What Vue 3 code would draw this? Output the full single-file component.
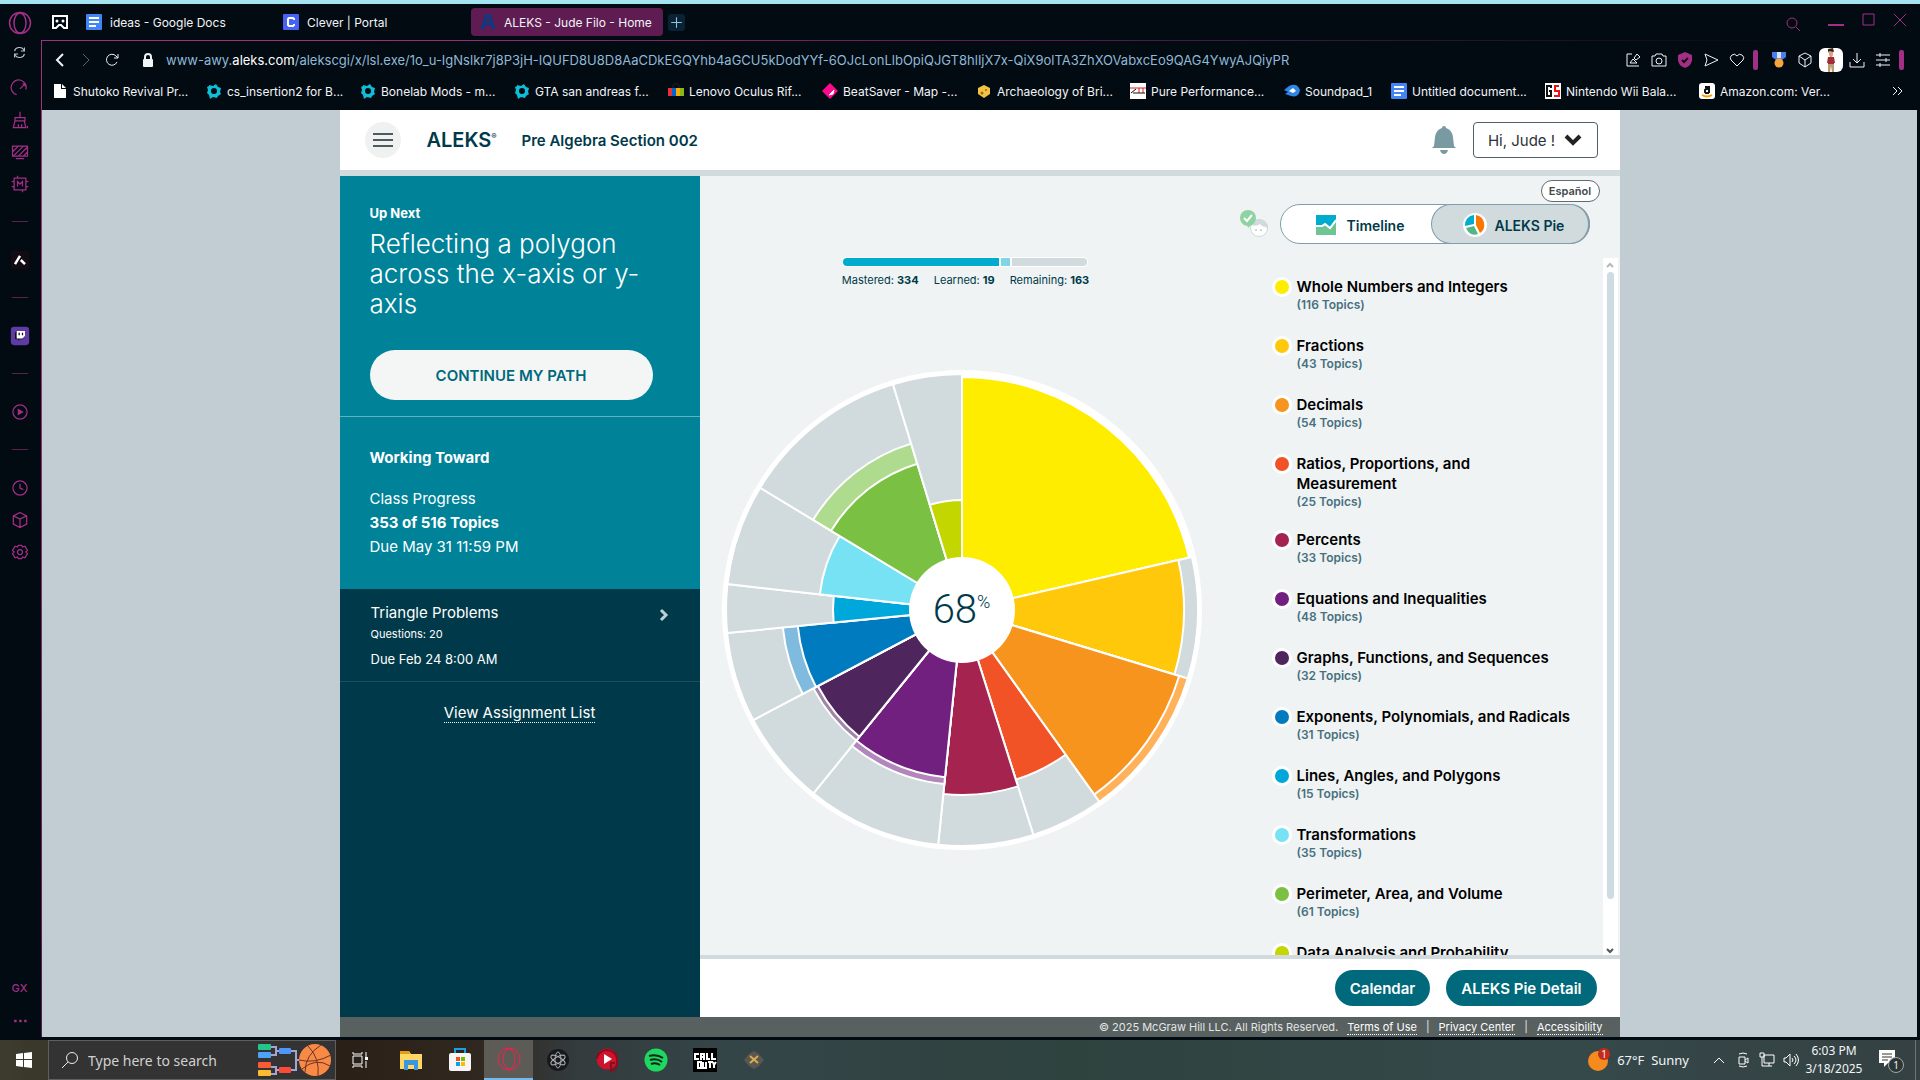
<script setup>
const bookmarks = [
  { icon: 'file', label: 'Shutoko Revival Pr...' },
  { icon: 'gear', label: 'cs_insertion2 for B...' },
  { icon: 'gear', label: 'Bonelab Mods - m...' },
  { icon: 'gear', label: 'GTA san andreas f...' },
  { icon: 'bag', label: 'Lenovo Oculus Rif...' },
  { icon: 'saber', label: 'BeatSaver - Map -...' },
  { icon: 'cheese', label: 'Archaeology of Bri...' },
  { icon: 'pure', label: 'Pure Performance...' },
  { icon: 'comet', label: 'Soundpad_1', short: true },
  { icon: 'docs', label: 'Untitled document...' },
  { icon: 'gs', label: 'Nintendo Wii Bala...' },
  { icon: 'amazon', label: 'Amazon.com: Ver...' },
]

// start/end are degrees clockwise from the top; mastered and learned are radii
const topics = [
  { name: 'Whole Numbers and Integers', count: 116, color: '#ffed00', soft: '#fff799', start: 0, end: 77, mastered: 233, learned: 0 },
  { name: 'Fractions', count: 43, color: '#ffc80a', soft: '#ffe07a', start: 77, end: 106.9, mastered: 222, learned: 0 },
  { name: 'Decimals', count: 54, color: '#f7941d', soft: '#ffb259', start: 106.9, end: 144.4, mastered: 227, learned: 236 },
  { name: 'Ratios, Proportions, and Measurement', count: 25, color: '#f15327', soft: '#f8a48c', start: 144.4, end: 162.4, mastered: 178, learned: 0 },
  { name: 'Percents', count: 33, color: '#a5234f', soft: '#d08aa2', start: 162.4, end: 185.8, mastered: 185, learned: 0 },
  { name: 'Equations and Inequalities', count: 48, color: '#722080', soft: '#b285bb', start: 185.8, end: 219, mastered: 168, learned: 175 },
  { name: 'Graphs, Functions, and Sequences', count: 32, color: '#4f255d', soft: '#a084a8', start: 219, end: 242.2, mastered: 163, learned: 168 },
  { name: 'Exponents, Polynomials, and Radicals', count: 31, color: '#007bc0', soft: '#7fbbde', start: 242.2, end: 264.4, mastered: 165, learned: 180 },
  { name: 'Lines, Angles, and Polygons', count: 15, color: '#00a7da', soft: '#80d3ed', start: 264.4, end: 276.3, mastered: 129, learned: 0 },
  { name: 'Transformations', count: 35, color: '#76e2f4', soft: '#bbf1fa', start: 276.3, end: 301.2, mastered: 143, learned: 0 },
  { name: 'Perimeter, Area, and Volume', count: 61, color: '#7ac143', soft: '#aedb8e', start: 301.2, end: 343, mastered: 153, learned: 174 },
  { name: 'Data Analysis and Probability', count: 23, color: '#c3d600', soft: '#e1eb80', start: 343, end: 360, mastered: 110, learned: 0 },
]

function wedge(radius, start, end) {
  const point = (deg) => {
    const a = (deg * Math.PI) / 180
    return `${(240 + radius * Math.sin(a)).toFixed(2)} ${(240 - radius * Math.cos(a)).toFixed(2)}`
  }
  return `M240 240L${point(start)}A${radius} ${radius} 0 0 1 ${point(end)}Z`
}
</script>

<template>
  <div class="desktop">
    <div class="browser">
      <nav class="rail" aria-label="Browser sidebar">
        <svg class="ri opera" viewBox="0 0 24 24"><circle cx="12" cy="12" r="10.5" /><ellipse cx="12" cy="12" rx="6" ry="10" /></svg>
        <svg class="ri pale" viewBox="0 0 24 24"><path d="M5 10a7 6 0 0 1 13-2l1 2M19 5v5h-5M19 14a7 6 0 0 1-13 2l-1-2M5 19v-5h5" /></svg>
        <svg class="ri" viewBox="0 0 24 24"><path d="M8 20a9 9 0 1 1 11-6M12 13l6-6M15 7h3v3" /></svg>
        <svg class="ri" viewBox="0 0 24 24"><path d="M12 2v7M6 9h12v4H6zM6 13l-2 8h15l-2-8M10 17v4M14 17v4M21 19v3" /></svg>
        <svg class="ri" viewBox="0 0 24 24"><path d="M3 5h18v12H3zM3 12l7-7M4 17L16 5M10 17L21 6M16 17l5-5M7 20h10" /></svg>
        <svg class="ri" viewBox="0 0 24 24"><path d="M5 5h14v14H5zM9 2v3M15 19v3M2 9h3M19 9h3M2 15h3M19 15h3M9 15V9l3 3 3-3v6" /></svg>
        <i class="dash"></i>
        <svg class="ri tile" viewBox="0 0 24 24"><rect x="1" y="1" width="22" height="22" rx="3" fill="#120b14" stroke="none" /><path d="M6 17l6-10M13 12l5 5" stroke="#fff" stroke-width="3" /></svg>
        <i class="dash"></i>
        <svg class="ri tile" viewBox="0 0 24 24"><rect x="1" y="1" width="22" height="22" rx="4" fill="#5f3ca5" stroke="none" /><path d="M6 8l2-2h10v7l-3 3h-3l-2 2v-2H6z" fill="#111" stroke="none" /><path d="M8 6h10v6l-3 3H8z" fill="#fff" stroke="none" /><path d="M11 8v3M15 8v3" stroke="#111" /></svg>
        <i class="dash"></i>
        <svg class="ri" viewBox="0 0 24 24"><circle cx="12" cy="12" r="8.5" /><path d="M10 9l5 3-5 3z" fill="#a22f86" /></svg>
        <i class="dash"></i>
        <svg class="ri" viewBox="0 0 24 24"><circle cx="12" cy="12" r="8.5" /><path d="M12 7v5l4 2" /></svg>
        <svg class="ri" viewBox="0 0 24 24"><path d="M12 3l8 4v10l-8 4-8-4V7zM4 7l8 4 8-4M12 11v10" /></svg>
        <svg class="ri" viewBox="0 0 24 24"><path d="M10 4h4l1 2 3-1 3 5-2 2 2 2-3 5-3-1-1 2h-4l-1-2-3 1-3-5 2-2-2-2 3-5 3 1z" /><circle cx="12" cy="12" r="3" /></svg>
        <span class="grow"></span>
        <b class="gx">GX</b>
        <svg class="ri" viewBox="0 0 24 24"><path d="M5 12h3M11 12h3M17 12h3" stroke-width="3" /></svg>
      </nav>

      <div class="frame">
        <div class="tabs">
          <svg class="vr" viewBox="0 0 18 18"><path d="M2 3h14v12h-3l-3-3H8l-3 3H2z" fill="none" stroke="#fff" stroke-width="2" /><circle cx="6" cy="8" r="1.5" fill="#fff" /><circle cx="12" cy="8" r="1.5" fill="#fff" /></svg>
          <button class="tab">
            <svg viewBox="0 0 16 16"><rect width="16" height="16" rx="1" fill="#4285f4" /><path d="M3 4h10M3 8h10M3 12h7" stroke="#fff" stroke-width="2" /></svg>
            ideas - Google Docs
          </button>
          <button class="tab">
            <svg viewBox="0 0 16 16"><rect width="16" height="16" rx="1" fill="#4763f5" /><path d="M11 6V5L10 4H6L5 5v6l1 1h4l1-1v-1" fill="none" stroke="#fff" stroke-width="2" /></svg>
            Clever | Portal
          </button>
          <button class="tab active">
            <svg viewBox="0 0 16 16"><path d="M2 15L7 1h2l5 14M5 10h6" fill="none" stroke="#083b83" stroke-width="3" /></svg>
            ALEKS - Jude Filo - Home
          </button>
          <button class="plus" aria-label="New tab"><svg viewBox="0 0 16 16"><path d="M8 3v10M3 8h10" stroke="#8fc4e0" /></svg></button>
          <span class="grow"></span>
          <div class="winctl">
            <svg class="find" viewBox="0 0 16 16"><circle cx="7" cy="7" r="5" /><path d="M11 11l4 4" /></svg>
            <svg viewBox="0 0 16 16"><path d="M0 13h16" stroke-width="2" /></svg>
            <svg viewBox="0 0 16 16"><path d="M3 2h11v11H3z" /></svg>
            <svg viewBox="0 0 16 16"><path d="M2 2l12 12M14 2L2 14" /></svg>
          </div>
        </div>

        <div class="panel">
          <div class="address">
            <svg class="ic" viewBox="0 0 16 16"><path d="M11 2L5 8l6 6" stroke-width="2" /></svg>
            <svg class="ic dim" viewBox="0 0 16 16"><path d="M5 2l6 6-6 6" /></svg>
            <svg class="ic" viewBox="0 0 16 16"><path d="M13 10a5.500 5.500 0 1 1-1-6l2 2M14 2v4h-4" /></svg>
            <svg class="ic lock" viewBox="0 0 16 16"><rect x="3" y="7" width="10" height="8" rx="1" fill="#f2f5f7" stroke="none" /><path d="M5 8V5a3 3 0 0 1 6 0v3" stroke-width="2" /></svg>
            <div class="url">www-awy.<b>aleks.com</b>/alekscgi/x/lsl.exe/1o_u-IgNslkr7j8P3jH-IQUFD8U8D8AaCDkEGQYhb4aGCU5kDodYYf-6OJcLonLlbOpiQJGT8hlIjX7x-QiX9olTA3ZhXOVabxcEo9QAG4YwyAJQiyPR</div>
            <span class="grow"></span>
            <div class="tools">
              <svg class="ic" viewBox="0 0 16 16"><path d="M7 2H2v12h12M5 11l3-4 4 4zM9 6l3-4 3 3-4 3z" /></svg>
              <svg class="ic" viewBox="0 0 16 16"><path d="M1 4h3l1-2h6l1 2h3v10H1z" /><circle cx="8" cy="9" r="3" /></svg>
              <svg class="ic" viewBox="0 0 16 16"><path d="M8 0l7 3v5q0 5-7 8-7-3-7-8V3z" fill="#a22f86" stroke="none" /><path d="M5 8l2 2 4-4" stroke="#1a0716" stroke-width="2" /></svg>
              <svg class="ic" viewBox="0 0 16 16"><path d="M2 2l13 6-13 6 2-6z" /></svg>
              <svg class="ic" viewBox="0 0 16 16"><path d="M8 14L2 8a3.600 3.600 0 0 1 6-4 3.600 3.600 0 0 1 6 4z" /></svg>
              <i class="bar"></i>
              <svg class="ic" viewBox="0 0 16 16"><path d="M1 0h14v5l-4 3H5L1 5z" fill="#4c7df0" stroke="none" /><path d="M6 0h4v6H6z" fill="#d7e4ff" stroke="none" /><circle cx="8" cy="11" r="4.500" fill="#f6a63a" stroke="none" /></svg>
              <svg class="ic" viewBox="0 0 16 16"><path d="M8 1l6 3v7l-6 4-6-4V4zM2 4l6 4 6-4M8 8v7" /></svg>
              <svg class="avatar" viewBox="0 0 24 24"><rect width="24" height="24" rx="6" fill="#fff" /><path d="M10 2h4v5l-1 2h-2l-1-2z" fill="#dca27e" /><path d="M9 1l5-1 1 4-5-1-1 2z" fill="#382018" /><path d="M9 9h6l1 6h-1v1H9v-1H8z" fill="#a42b39" /><path d="M9 16h6v8h-2l-1-6-1 6H9z" fill="#b99c75" /></svg>
              <svg class="ic" viewBox="0 0 16 16"><path d="M8 1v10M4 7l4 4 4-4M1 10v5h14v-5" /></svg>
              <svg class="ic" viewBox="0 0 16 16"><path d="M1 3h14M1 8h14M1 13h14M5 1v4M11 6v4M5 11v4" /></svg>
              <i class="bar"></i>
            </div>
          </div>
          <div class="bookmarks">
            <a v-for="b in bookmarks" :key="b.label" href="#" class="bm" :class="{ short: b.short }">
              <svg v-if="b.icon === 'file'" viewBox="0 0 16 16"><path d="M2 1h7v5h5v9H2zM10 1l4 4h-4z" fill="#fff" /></svg>
              <svg v-else-if="b.icon === 'gear'" viewBox="0 0 16 16"><path d="M3 2l4 1 3-2 2 3 3 1-1 4 1 2-3 2-1 2-4-1-3 2-1-4-2-2 1-3-1-3 2-1z" fill="#10bdd6" /><circle cx="8" cy="8" r="3" fill="#020a12" /></svg>
              <svg v-else-if="b.icon === 'bag'" viewBox="0 0 16 16"><path d="M5 5V2q3-3 6 0v3" fill="none" stroke="#222" /><path d="M0 5h4v8H0z" fill="#e53238" /><path d="M4 5h4v8H4z" fill="#0064d2" /><path d="M8 5h4v8H8z" fill="#f5af02" /><path d="M12 5h4v8h-4z" fill="#86b817" /></svg>
              <svg v-else-if="b.icon === 'saber'" viewBox="0 0 16 16"><path d="M8 0l8 8-8 8-8-8z" fill="#ff0a8c" /><path d="M7 12l5-5-1 4z" stroke="#fff" fill="#fff" /></svg>
              <svg v-else-if="b.icon === 'cheese'" viewBox="0 0 16 16"><path d="M8 2l6 3v6l-6 4-6-4V5z" fill="#f5c243" /><circle cx="6" cy="10" r="1.500" fill="#9a6b15" /><circle cx="10" cy="7" r="1" fill="#9a6b15" /></svg>
              <svg v-else-if="b.icon === 'pure'" viewBox="0 0 16 16"><path d="M0 0h16v16H0z" fill="#fff" /><path d="M0 5h16M9 5v5M13 5v5" stroke="#d22" stroke-width="1" /><path d="M1 10l5-4M3 10h12" stroke="#111" stroke-width="1" /></svg>
              <svg v-else-if="b.icon === 'comet'" viewBox="0 0 16 16"><path d="M0 7l5-4q8-4 11 4-1 8-9 6l-6-2 3-2z" fill="#2f86e5" /><path d="M5 8l4-3 3 3-3 2z" fill="#fff" /></svg>
              <svg v-else-if="b.icon === 'docs'" viewBox="0 0 16 16"><rect width="16" height="16" rx="1" fill="#4285f4" /><path d="M3 4h10M3 8h10M3 12h7" stroke="#fff" stroke-width="2" /></svg>
              <svg v-else-if="b.icon === 'gs'" viewBox="0 0 16 16"><path d="M0 0h16v16H0z" fill="#fff" /><path d="M6 5V3H2v10h4V8H4" fill="none" stroke="#111" stroke-width="2" /><path d="M14 3h-4v5h4v5H9" fill="none" stroke="#e11" stroke-width="2" /></svg>
              <svg v-else viewBox="0 0 16 16"><rect width="16" height="16" rx="3" fill="#fff" /><path d="M6 4h4v6M10 6H7L6 7v2l1 1h3" fill="none" stroke="#111" stroke-width="2" /><path d="M3 12q5 3 10 0" fill="none" stroke="#f90" stroke-width="2" /></svg>
              <span>{{ b.label }}</span>
            </a>
            <span class="grow"></span>
            <svg class="more" viewBox="0 0 16 16"><path d="M3 4l4 4-4 4M8 4l4 4-4 4" /></svg>
          </div>

          <div class="viewport">
            <div class="app">
              <header class="top">
                <button class="burger" aria-label="Menu"><svg viewBox="0 0 36 36"><path d="M8 12h20M8 18h20M8 24h20" stroke="#4f5a5e" stroke-width="2" /></svg></button>
                <div class="logo">ALEKS<sup>®</sup></div>
                <h1>Pre Algebra Section 002</h1>
                <span class="grow"></span>
                <svg class="bell" viewBox="0 0 24 28"><path d="M12 0q2 0 2 2 6 2 7 9l1 9 2 2H0l2-2 1-9q1-7 7-9 0-2 2-2zM8 24h8q-1 4-4 4t-4-4z" fill="#7a9aa3" /></svg>
                <button class="user">Hi, Jude ! <svg viewBox="0 0 18 12"><path d="M2 2l7 7 7-7" /></svg></button>
              </header>

              <div class="columns">
                <aside class="side">
                  <section class="next">
                    <h3>Up Next</h3>
                    <h2>Reflecting a polygon across the x-axis or y-axis</h2>
                    <button>CONTINUE MY PATH</button>
                  </section>
                  <section class="toward">
                    <h3>Working Toward</h3>
                    <p>Class Progress</p>
                    <p><b>353 of 516 Topics</b></p>
                    <p>Due May 31 11:59 PM</p>
                  </section>
                  <section class="task">
                    <div>
                      <p>Triangle Problems</p>
                      <p class="small">Questions: 20</p>
                      <p class="due">Due Feb 24 8:00 AM</p>
                    </div>
                    <svg viewBox="0 0 10 14"><path d="M2 2l5 5-5 5" /></svg>
                  </section>
                  <p class="all"><a href="#">View Assignment List</a></p>
                </aside>

                <main class="main">
                  <div class="board">
                    <section class="chart">
                      <div class="summary">
                        <div class="progress"><i class="done"></i><i class="learned"></i><i class="rest"></i></div>
                        <div class="counts">
                          <span>Mastered: <b>334</b></span><span>Learned: <b>19</b></span><span>Remaining: <b>163</b></span>
                        </div>
                      </div>
                      <div class="pie">
                        <svg viewBox="0 0 480 480">
                          <circle cx="240" cy="240" r="240" fill="#fff" />
                          <g stroke="#fff" stroke-width="2">
                            <template v-for="t in topics" :key="t.name">
                              <path :d="wedge(236, t.start, t.end)" :fill="t.mastered > 230 ? '#fff' : '#d1dadd'" />
                              <path v-if="t.learned" :d="wedge(t.learned, t.start, t.end)" :fill="t.soft" />
                              <path :d="wedge(t.mastered, t.start, t.end)" :fill="t.color" />
                            </template>
                          </g>
                          <circle cx="240" cy="240" r="53" fill="#fff" />
                        </svg>
                        <div class="percent">68<sup>%</sup></div>
                      </div>
                    </section>

                    <section class="legend">
                      <div class="lang"><button>Español</button></div>
                      <div class="switch">
                        <svg class="status" viewBox="0 0 30 30"><circle cx="19" cy="19" r="8.500" fill="#fff" stroke="#d1dadd" /><path d="M11 16q3-6 9-6 7 1 8 8v3l-2-3q-4 0-6-3-4 3-9 1z" fill="#d1dadd" /><path d="M16 20v2M21 20v2" stroke="#cbd6da" stroke-width="2" /><circle cx="8" cy="9" r="8" fill="#8fd3a0" /><path d="M7 15l1 4 4-4z" fill="#8fd3a0" /><path d="M4 9l3 3 5-6" fill="none" stroke="#fff" stroke-width="2" /></svg>
                        <div class="toggle">
                          <button class="time">
                            <svg viewBox="0 0 20 20"><path d="M0 0h20v6l-6 7-5-4-4 3H0z" fill="#00accd" /><path d="M0 12h6l3-2 5 4 6-7v13H0z" fill="#6fc493" /><path d="M0 11h6l3-2 5 4 6-8" fill="none" stroke="#fff" stroke-width="2" /></svg>
                            Timeline
                          </button>
                          <button class="sel">
                            <svg viewBox="0 0 24 24"><circle cx="12" cy="12" r="12" fill="#fff" /><path d="M13 2a10 10 0 0 1 4 18l-4-8z" fill="#f97600" /><path d="M11 2v9l-9 2A10 10 0 0 1 11 2z" fill="#00accd" /><path d="M3 15l8-2 4 8Q7 24 3 15z" fill="#52b689" /></svg>
                            ALEKS Pie
                          </button>
                        </div>
                      </div>
                      <div class="scroller">
                        <ul>
                          <li v-for="t in topics" :key="t.name">
                            <i :style="{ background: t.color }"></i>
                            <div><strong>{{ t.name }}</strong><span>({{ t.count }} Topics)</span></div>
                          </li>
                        </ul>
                        <div class="track">
                          <svg viewBox="0 0 14 14"><path d="M4 9l3-3 3 3" stroke="#b8b8b8" /></svg>
                          <i></i>
                          <svg viewBox="0 0 14 14"><path d="M4 8l3 3 3-3" stroke="#555" /></svg>
                        </div>
                      </div>
                    </section>
                  </div>
                  <div class="actions"><button>Calendar</button><button>ALEKS Pie Detail</button></div>
                </main>
              </div>

              <footer class="foot">
                <span class="copy">© 2025 McGraw Hill LLC. All Rights Reserved.</span>
                <a href="#">Terms of Use</a><i>|</i><a href="#">Privacy Center</a><i>|</i><a href="#">Accessibility</a>
              </footer>
            </div>
          </div>
        </div>
      </div>
    </div>

    <div class="taskbar">
      <button class="cell" aria-label="Start"><svg viewBox="0 0 16 16"><path d="M0 2l7-1v6H0zM8 1l8-1v7H8zM0 8h7v7l-7-1zM8 8h8v8l-8-1z" fill="#fff" /></svg></button>
      <label class="search">
        <svg viewBox="0 0 18 18"><circle cx="11" cy="7" r="5.500" fill="none" stroke="#eee" /><path d="M7 11l-6 6" stroke="#eee" /></svg>
        <input type="text" placeholder="Type here to search" aria-label="Type here to search" />
        <svg class="promo" viewBox="0 0 76 36">
          <path d="M13 5h5v8h-5M18 9h6M13 25h5v7h-5M18 28h6M32 9h6v19h-6M38 18h4" fill="none" stroke="#a7a3d0" stroke-width="2" />
          <rect x="0" y="2" width="13" height="6" rx="1" fill="#25c48c" /><rect x="0" y="10" width="13" height="6" rx="1" fill="#4da3f7" /><rect x="21" y="6" width="12" height="6" rx="1" fill="#4d97f7" />
          <rect x="0" y="20" width="13" height="6" rx="1" fill="#fa5b35" /><rect x="0" y="28" width="13" height="6" rx="1" fill="#fdbb2f" /><rect x="21" y="25" width="12" height="6" rx="1" fill="#fb4b35" />
          <circle cx="57" cy="18" r="16" fill="#f98a45" /><path d="M41 18q16 4 32-5M50 4q12 12 10 30M63 3q-16 10-16 27M44 27q14-12 28-3" fill="none" stroke="#6c3226" />
        </svg>
      </label>
      <button class="cell view" aria-label="Task view"><svg viewBox="0 0 16 16"><path d="M1 0v2h9V0M1 4h9v8H1zM1 16v-2h9v2M14 0v5M14 9v7" fill="none" stroke="#fff" /><rect x="13" y="5" width="3" height="3" fill="#fff" /></svg></button>
      <button class="cell big" aria-label="Files"><svg viewBox="0 0 24 24"><path d="M1 3h9l2 3h11v15H1z" fill="#ffd764" /><path d="M1 3h9l1 3H1z" fill="#e39b10" /><path d="M5 12h14v10h-4v-5H9v5H5z" fill="#3a96dd" /></svg></button>
      <button class="cell big" aria-label="Store"><svg viewBox="0 0 24 24"><path d="M7 6V1h10v5" fill="none" stroke="#1a9fe4" stroke-width="2" /><rect x="1" y="5" width="22" height="18" rx="2" fill="#f5f5f5" /><path d="M8 9h4v4H8z" fill="#f25022" /><path d="M13 9h4v4h-4z" fill="#7fba00" /><path d="M8 14h4v4H8z" fill="#00a4ef" /><path d="M13 14h4v4h-4z" fill="#ffb900" /></svg></button>
      <button class="cell big on" aria-label="Browser"><svg viewBox="0 0 24 24" fill="none" stroke="#fa1e4e"><circle cx="12" cy="12" r="11" stroke-width="1" /><ellipse cx="12" cy="12" rx="6" ry="10" /></svg></button>
      <button class="cell big" aria-label="Atom"><svg viewBox="0 0 24 24"><circle cx="12" cy="12" r="11" fill="#17191c" /><g fill="none" stroke="#a9aeb2"><ellipse cx="12" cy="12" rx="3" ry="8" /><ellipse cx="12" cy="12" rx="3" ry="8" transform="rotate(60 12 12)" /><ellipse cx="12" cy="12" rx="3" ry="8" transform="rotate(120 12 12)" /></g></svg></button>
      <button class="cell big" aria-label="Music"><svg viewBox="0 0 24 24"><circle cx="12" cy="11" r="10.500" fill="#d0132c" /><path d="M2 11a10 9 0 0 1 20 0v7l-3 4-3 1v-8h4" fill="none" stroke="#8f0a1c" stroke-width="2" /><path d="M9 6l8 5-8 5z" fill="#fff" /></svg></button>
      <button class="cell big" aria-label="Player"><svg viewBox="0 0 24 24"><circle cx="12" cy="12" r="11.500" fill="#1ed760" /><path d="M5 8q8-2 14 2M6 12q7-2 12 2M7 16q5-2 9 1" fill="none" stroke="#12251a" stroke-width="2" /></svg></button>
      <button class="cell big" aria-label="Call of Duty"><svg viewBox="0 0 24 24"><path d="M0 0h24v24H0z" fill="#000" /><path d="M6 6H2v5h4M8 12V6h3v6M8 9h3M14 5v6h3M19 5v6h4M5 14v6h3v-6zM10 14v6h3v-6M15 14h5M17 14v6M20 14l1 3v3M23 14l-2 3" fill="none" stroke="#fff" stroke-width="2" /></svg></button>
      <button class="cell big" aria-label="Game"><svg viewBox="0 0 24 24"><path d="M12 3l5 3 5 6-5 6-5 3-5-3-5-6 5-6z" fill="#5a5751" /><path d="M8 8l8 7M16 8l-8 7" stroke="#d9ac4d" stroke-width="2" /></svg></button>
      <span class="grow"></span>
      <div class="weather"><svg viewBox="0 0 24 24"><circle cx="11" cy="13" r="10" fill="#f58a1f" /><circle cx="17" cy="6" r="6" fill="#c42b1c" /></svg><em>1</em><span>67°F&nbsp; Sunny</span></div>
      <div class="tray">
        <svg viewBox="0 0 16 16"><path d="M3 11l5-5 5 5" /></svg>
        <svg viewBox="0 0 16 16"><path d="M4 5h6v7H4zM10 8l3-2v5l-3-2M4 2q4-2 8 0M4 14q4 2 8 0" /></svg>
        <svg viewBox="0 0 16 16"><path d="M5 3h10v8H5zM10 11v3M7 14h6M1 1h4v4H1zM3 5v9h4" /></svg>
        <svg viewBox="0 0 16 16"><path d="M1 6h2l4-4v12l-4-4H1zM9 6q2 2 0 4M11 4q4 4 0 8M13 2q5 6 0 12" /></svg>
      </div>
      <div class="clock"><span>6:03 PM</span><span>3/18/2025</span></div>
      <div class="note"><svg viewBox="0 0 24 24"><path d="M2 2h16v13h-7l-4 4v-4H2z" fill="#fff" /><path d="M5 6h10M5 9h10M5 12h6" stroke="#333" /></svg><em>1</em></div>
      <i class="edge"></i>
    </div>
  </div>
</template>

<style>
body { margin: 0; background: #020a12; }
</style>

<style scoped>
* { box-sizing: border-box; }
button { border: 0; padding: 0; background: none; font: inherit; color: inherit; }
h1, h2, h3, p, ul { margin: 0; padding: 0; font-weight: 400; }
i, em { font-style: normal; display: block; }
svg { display: block; flex: none; }
.grow { flex: 1; }
.desktop { height: 100vh; display: flex; flex-direction: column; font-family: Inter, sans-serif; color: #f2f5f7; border-top: 4px solid #a3e4f0; background: #020a12; overflow: hidden; }
.browser { flex: 1; min-height: 0; display: flex; padding-right: 3px; padding-bottom: 3px; }

.rail { width: 41px; display: flex; flex-direction: column; align-items: center; padding: 7px 2px 0 0; }
.ri { width: 20px; height: 20px; margin: 6px 0; fill: none; stroke: #a22f86; stroke-width: 1.5px; }
.opera { width: 24px; height: 24px; margin: 0 0 9px; }
.pale { stroke: #b8c4cc; width: 17px; height: 17px; margin: 0 0 11px; }
.dash { width: 16px; height: 1px; margin: 21px 0 22px; background: #5d2150; }
.dash + .ri { margin: 6px 0; }
.gx { color: #a22f86; font-size: 11px; line-height: 14px; font-weight: 500; margin-bottom: 10px; }

.frame { flex: 1; min-width: 0; display: flex; flex-direction: column; }
.tabs { height: 36px; display: flex; align-items: center; padding-left: 10px; font-size: 12px; }
.vr { width: 18px; height: 18px; margin-right: 8px; }
.tab { flex: none; display: flex; align-items: center; gap: 8px; width: 192px; height: 28px; padding-left: 9px; margin-right: 5px; border-radius: 4px; white-space: nowrap; }
.tab svg { width: 16px; height: 16px; }
.tab.active { background: #5f1c52; }
.plus { width: 17px; height: 17px; border-radius: 3px; background: #0a2334; }
.winctl { display: flex; gap: 16px; padding-right: 9px; }
.winctl svg { width: 16px; height: 16px; fill: none; stroke: #a22f86; }
.winctl .find { margin: 4px 11px 0 0; }

.panel { flex: 1; min-height: 0; display: flex; flex-direction: column; border-left: 1px solid; border-top: 1px solid; border-image: linear-gradient(135deg, #a22f86 0, #a22f86 10%, #020a12 62%) 1; }
.address { height: 39px; display: flex; align-items: center; gap: 10px; padding: 0 10px 2px; }
.ic { width: 16px; height: 16px; fill: none; stroke: #eef3f6; }
.dim { stroke: #59636b; }
.lock { margin-left: 10px; }
.url { font-size: 13px; color: #8fb9d6; white-space: nowrap; }
.url b { font-weight: 400; color: #fff; }
.tools { display: flex; align-items: center; gap: 10px; }
.bar { width: 5px; height: 20px; border-radius: 2px; background: #a22f86; margin: 0 3px 0 -2px; }
.avatar { width: 24px; height: 24px; margin: 0 -4px; }
.bookmarks { height: 30px; display: flex; align-items: center; padding: 0 11px 8px 10px; font-size: 12px; }
.bm { display: flex; align-items: center; gap: 5px; width: 154px; color: #f2f5f7; text-decoration: none; white-space: nowrap; }
.bm svg { width: 16px; height: 16px; }
.bm.short { width: 107px; }
.more { width: 16px; height: 16px; fill: none; stroke: #eef3f6; }

.viewport { flex: 1; min-height: 0; background: #c1cdd2; }
.app { width: 1280px; max-width: 100%; height: 100%; margin: 0 auto; display: flex; flex-direction: column; }
.top { height: 66px; display: flex; align-items: center; padding: 0 22px 0 25px; background: #fff; border-bottom: 6px solid #d1dadd; color: #003a4a; }
.burger { width: 36px; height: 36px; border-radius: 50%; background: #f0f2f2; }
.logo { width: 95px; margin-left: 26px; font-size: 20px; font-weight: 600; color: #003a4a; display: flex; }
.logo sup { font-size: 8px; line-height: 16px; }
.top h1 { font-size: 15px; font-weight: 600; }
.bell { width: 24px; height: 28px; margin-right: 17px; }
.user { width: 125px; height: 36px; display: flex; align-items: center; justify-content: center; gap: 9px; border: 1px solid #4f6067; border-radius: 4px; font-size: 15px; color: #2b3336; }
.user svg { width: 18px; height: 12px; fill: none; stroke: #222; stroke-width: 4px; }

.columns { flex: 1; min-height: 0; display: flex; }
.side { width: 360px; background: #003a4a; color: #fff; font-size: 15px; }
.next { height: 241px; padding: 27px 30px 0; background: #008299; border-bottom: 1px solid #5cb2c1; }
.next h3 { font-size: 13px; line-height: 20px; font-weight: 700; }
.next h2 { font-size: 26px; line-height: 30px; font-weight: 300; margin: 6px 0 31px; }
.next button { width: 283px; height: 50px; border-radius: 25px; background: #f4f6f6; color: #00697b; font-size: 15px; font-weight: 600; }
.toward { height: 172px; padding: 31px 30px 0; background: #008299; line-height: 24px; }
.toward h3 { font-size: 15px; line-height: 20px; font-weight: 700; margin-bottom: 19px; }
.task { height: 93px; display: flex; justify-content: space-between; padding: 14px 31px 0; border-bottom: 1px solid #1b4f5e; line-height: 20px; }
.task .small { font-size: 11px; line-height: 22px; }
.task .due { font-size: 13px; line-height: 28px; }
.task svg { width: 10px; height: 14px; margin-top: 5px; fill: none; stroke: #bcd0d6; stroke-width: 3px; }
.all { padding-top: 21px; text-align: center; line-height: 20px; }
.all a { color: #fff; text-decoration: none; border-bottom: 1px dotted #fff; }

.main { flex: 1; min-width: 0; display: flex; flex-direction: column; }
.board { flex: 1; min-height: 0; display: flex; background: #eff3f4; border-bottom: 4px solid #d1dadd; color: #003a4a; }
.chart { flex: 1; min-width: 0; display: flex; flex-direction: column; align-items: center; padding-top: 81px; }
.summary { display: flex; flex-direction: column; align-items: center; padding-left: 8px; }
.progress { width: 246px; height: 10px; display: flex; gap: 2px; padding: 1px; border-radius: 5px; background: #fff; overflow: hidden; }
.progress i { height: 8px; }
.done { flex: 156; background: #00accd; border-radius: 4px 0 0 4px; }
.learned { flex: 9; background: #80d5e6; }
.rest { flex: 75; background: #d1dadd; border-radius: 0 4px 4px 0; }
.counts { display: flex; gap: 15px; margin-top: 4px; font-size: 11px; line-height: 18px; white-space: nowrap; }
.counts b { font-weight: 700; }
.pie { position: relative; width: 480px; height: 480px; margin-top: 81px; }
.pie > svg { width: 100%; height: 100%; }
.percent { position: absolute; inset: 0; display: flex; align-items: center; justify-content: center; font-family: Roboto, sans-serif; font-weight: 300; font-size: 40px; line-height: 48px; }
.percent sup { font-size: 18px; line-height: 24px; margin-bottom: 16px; }

.legend { width: 396px; display: flex; flex-direction: column; }
.lang { display: flex; justify-content: flex-end; padding: 4px 20px 0 0; }
.lang button { width: 59px; height: 22px; border: 1px solid #5f6c70; border-radius: 11px; background: #fff; color: #40494c; font-size: 11px; font-weight: 600; }
.switch { display: flex; align-items: center; gap: 10px; margin-top: 2px; padding-left: 16px; }
.status { width: 30px; height: 30px; }
.toggle { width: 310px; height: 40px; display: flex; border: 1px solid #7f9eaa; border-radius: 20px; background: #fff; font-size: 14px; font-weight: 600; }
.toggle button { display: flex; align-items: center; color: #003a4a; }
.toggle .time { flex: 1; gap: 11px; padding: 2px 0 0 35px; }
.time svg { width: 20px; height: 20px; }
.toggle .sel { width: 159px; gap: 8px; padding: 2px 0 0 31px; margin: -1px; border: 1px solid #7f9eaa; border-right-width: 2px; border-radius: 20px; background: #d1dadd; }
.sel svg { width: 24px; height: 24px; }
.scroller { flex: 1; min-height: 0; display: flex; justify-content: space-between; margin-top: 14px; overflow: hidden; }
.scroller ul { width: 340px; list-style: none; padding: 19px 0 0 48px; }
.scroller li { display: flex; gap: 5px; min-height: 59px; padding-bottom: 20px; }
.scroller li i { width: 20px; height: 20px; flex: none; border: 3px solid #fff; border-radius: 50%; }
.scroller strong { display: block; font-size: 15px; line-height: 20px; font-weight: 600; color: #000; }
.scroller li:nth-child(4) strong { width: 200px; }
.scroller li:nth-child(8) strong { white-space: nowrap; }
.scroller span { display: block; font-size: 12px; line-height: 16px; font-weight: 600; color: #47707e; }
.track { width: 15px; margin-right: 2px; display: flex; flex-direction: column; align-items: center; background: #fff; }
.track svg { width: 14px; height: 14px; fill: none; stroke-width: 2px; }
.track i { width: 7px; height: 90%; border-radius: 4px; background: #cfdbe3; margin-bottom: auto; }
.actions { height: 58px; display: flex; align-items: center; justify-content: flex-end; gap: 16px; padding-right: 23px; background: #fff; }
.actions button { height: 36px; padding: 0 15px; border-radius: 18px; background: #006a7c; color: #fff; font-size: 15px; font-weight: 600; }
.foot { height: 20px; display: flex; align-items: center; justify-content: flex-end; gap: 9px; padding-right: 17px; background: #586060; color: #e2e6e6; font-size: 11px; line-height: 14px; }
.foot a { color: #fff; text-decoration: none; border-bottom: 1px dotted #fff; }

.taskbar { height: 40px; display: flex; align-items: center; font-family: "Noto Sans", sans-serif; background: linear-gradient(90deg, #3d3c2d 0, #38352a 3%, #2b2018 18%, #302820 25%, #333b3d 30%, #344548 38%, #2e423e 56%, #35494b 80%, #354142 100%); }
.cell { width: 48px; height: 40px; display: flex; align-items: center; justify-content: center; }
.cell svg { width: 16px; height: 16px; }
.cell.view { margin-right: 2px; }
.cell.big { width: 49px; }
.cell.big svg { width: 24px; height: 24px; }
.cell.on { background: #5d5b56; border-bottom: 2px solid #76b9ed; }
.search { width: 288px; height: 40px; display: flex; align-items: center; padding: 0 1px 0 12px; border: 1px solid #5f5f5d; background: #333; }
.search > svg { width: 18px; height: 18px; }
.search input { flex: 1; min-width: 0; border: 0; padding: 0; margin-left: 9px; background: none; font: 14px "Noto Sans", sans-serif; color: #fff; outline: 0; }
.search input::placeholder { color: #d0d0d0; opacity: 1; }
.search .promo { width: 76px; height: 36px; }
.weather { position: relative; display: flex; align-items: center; gap: 6px; font-size: 13px; margin-right: 22px; }
.weather svg { width: 24px; height: 24px; }
.weather em { position: absolute; left: 14px; top: -1px; font-size: 10px; line-height: 14px; }
.tray { display: flex; gap: 8px; }
.tray svg { width: 16px; height: 16px; fill: none; stroke: #fff; }
.clock { width: 70px; display: flex; flex-direction: column; align-items: center; font-size: 12px; line-height: 18px; }
.note { position: relative; margin: 0 14px 0 8px; }
.note svg { width: 24px; height: 24px; }
.note em { position: absolute; left: 11px; top: 9px; width: 16px; height: 16px; border: 1px solid #a3a8a8; border-radius: 50%; background: #2d3637; font-size: 10px; line-height: 14px; text-align: center; }
.edge { width: 1px; height: 40px; background: #6b7677; margin-right: 4px; }
</style>
